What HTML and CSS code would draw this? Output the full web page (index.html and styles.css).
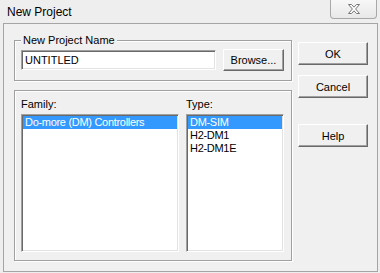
FILE: index.html
```html
<!DOCTYPE html>
<html>
<head lang="en">
    <meta charset="UTF-8">
    <title>New Project</title>
    <link rel="stylesheet" href="styles.css">
</head>
<body>
<div class="window">
    <div class="titlebar">
        <span class="title">New Project</span>
        <div class="close">
            <svg width="14" height="12" viewBox="0 0 14 12">
                <polygon points="1.5,1.5 4.5,1.5 7,4.2 9.5,1.5 12.5,1.5 8.6,6 12.5,10.5 9.5,10.5 7,7.8 4.5,10.5 1.5,10.5 5.4,6" fill="#ffffff" stroke="#777777" stroke-width="1"/>
            </svg>
        </div>
    </div>
    <div class="client">
        <div class="main">
            <!-- project name -->
            <div class="group group-name">
                <div class="group-title">New Project Name</div>
                <div class="name-row">
                    <div class="textbox">UNTITLED</div>
                    <button class="btn btn-browse">Browse...</button>
                </div>
            </div>
            <!-- family / type -->
            <div class="group group-select">
                <div class="columns">
                    <div class="col">
                        <div class="col-label">Family:</div>
                        <ul class="listbox list-family">
                            <li class="sel">Do-more (DM) Controllers</li>
                        </ul>
                    </div>
                    <div class="col">
                        <div class="col-label">Type:</div>
                        <ul class="listbox list-type">
                            <li class="sel">DM-SIM</li>
                            <li>H2-DM1</li>
                            <li>H2-DM1E</li>
                        </ul>
                    </div>
                </div>
            </div>
        </div>
        <div class="buttons">
            <button class="btn btn-side">OK</button>
            <button class="btn btn-side btn-cancel">Cancel</button>
            <button class="btn btn-side btn-help">Help</button>
        </div>
    </div>
</div>
</body>
</html>
```

FILE: styles.css
```css
*{
    margin: 0;
    padding: 0;
    box-sizing: border-box;
}
body{
    background: #eeeeee;
    font-family: "Liberation Sans", Arial, sans-serif;
    font-size: 11px;
    color: #000;
}
.window{
    width: 380px;
    height: 273px;
    background: #eeeeee;
    overflow: hidden;
}
.titlebar{
    height: 23px;
    display: flex;
    align-items: flex-start;
    justify-content: space-between;
}
.title{
    font-size: 12px;
    line-height: 14px;
    padding: 5px 0 0 7px;
}
.close{
    width: 47px;
    height: 19px;
    margin-right: 3px;
    border: 1px solid #a8a8a8;
    border-top: none;
    border-radius: 0 0 4px 4px;
    background: linear-gradient(#f7f7f7, #e8e8e8);
    display: flex;
    align-items: center;
    justify-content: center;
}
.client{
    height: 249px;
    margin: 0 2px 1px 3px;
    border: 1px solid #a5a5a5;
    background: #f0f0f0;
    display: flex;
    align-items: flex-start;
}
.main{
    width: 278px;
    margin-left: 10px;
    padding-top: 16px;
}
.group{
    border: 1px solid #a0a0a0;
    box-shadow: 1px 1px 0 #fff, inset 1px 1px 0 #fff;
}
.group-title{
    display: table;
    margin: -7px 0 0 6px;
    padding: 0 2px;
    line-height: 13px;
    background: #f0f0f0;
}
.name-row{
    display: flex;
    align-items: center;
    height: 22px;
    margin: 2px 0 9px 6px;
}
.textbox{
    width: 195px;
    height: 20px;
    background: #fff;
    border: 1px solid;
    border-color: #a0a0a0 #fff #fff #a0a0a0;
    box-shadow: inset 1px 1px 0 #696969, inset -1px -1px 0 #e3e3e3;
    padding-left: 3px;
    line-height: 18px;
}
.btn{
    font-family: "Liberation Sans", Arial, sans-serif;
    font-size: 11px;
    color: #000;
    background: #f0f0f0;
    border: 1px solid;
    border-color: #fff #696969 #696969 #fff;
    box-shadow: inset -1px -1px 0 #a0a0a0;
    display: block;
}
.btn-browse{
    width: 61px;
    height: 22px;
    margin-left: 7px;
}
.group-select{
    margin-top: 9px;
    padding: 0 7px 8px 6px;
}
.columns{
    display: flex;
    gap: 7px;
}
.col-label{
    line-height: 13px;
    margin: 7px 0 3px 0;
}
.listbox{
    list-style: none;
    height: 138px;
    background: #fff;
    border: 1px solid;
    border-color: #a0a0a0 #fff #fff #a0a0a0;
    box-shadow: inset 1px 1px 0 #696969, inset -1px -1px 0 #e3e3e3;
    padding: 1px;
}
.list-family{
    width: 158px;
}
.list-type{
    width: 98px;
}
.listbox li{
    line-height: 13px;
    height: 13px;
    padding-left: 2px;
    white-space: nowrap;
    letter-spacing: -0.3px;
}
.listbox li.sel{
    background: #3399ff;
    color: #fff;
}
.buttons{
    width: 70px;
    margin-left: 6px;
    padding-top: 18px;
}
.btn-side{
    width: 70px;
    height: 23px;
}
.btn-cancel{
    margin-top: 10px;
}
.btn-help{
    margin-top: 26px;
}
```
